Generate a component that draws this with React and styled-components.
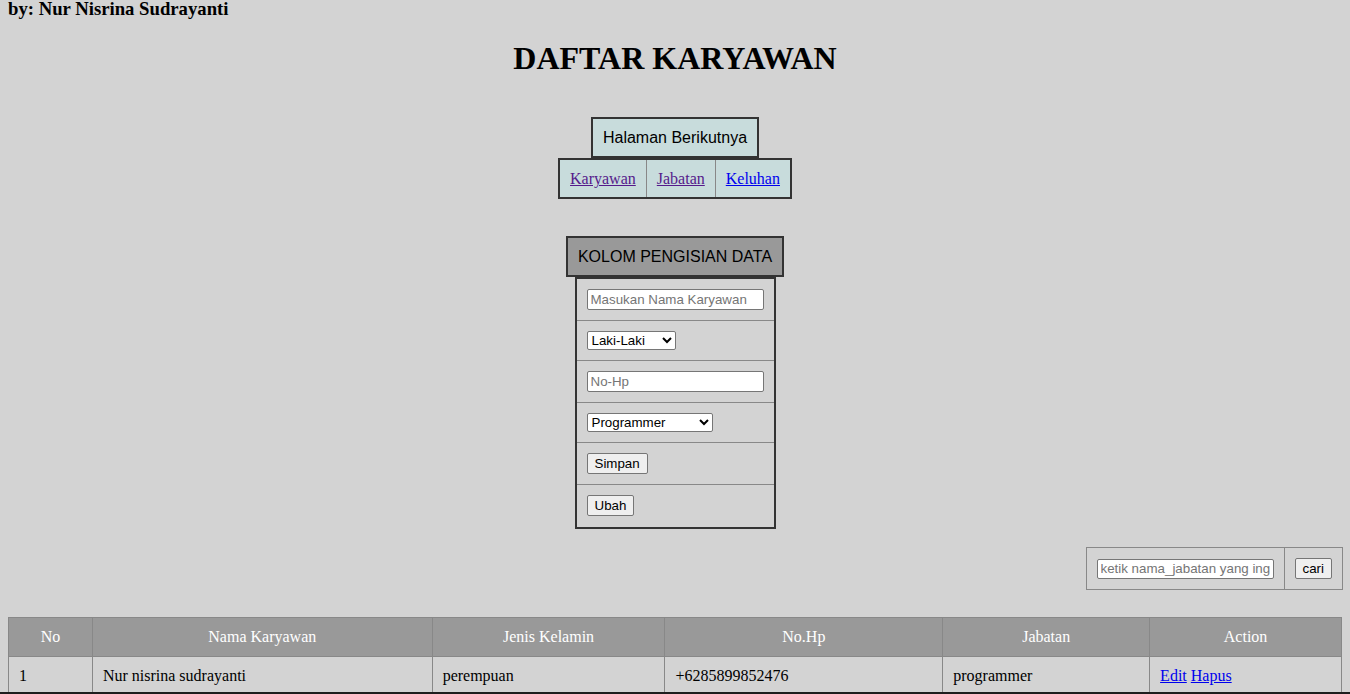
import React from 'react';
import styled, { createGlobalStyle } from 'styled-components';

const GlobalStyle = createGlobalStyle`
  html, body {
    margin: 0;
    padding: 0;
    background: #d3d3d3;
  }
  body {
    padding: 0 8px;
    font-family: "Liberation Serif", "Times New Roman", serif;
    font-size: 16px;
    color: #000;
    overflow: hidden;
  }
`;

const Author = styled.h3`
  margin: -2px 0 0;
  font-size: 18.72px;
  font-weight: bold;
  line-height: 21px;
`;

const Title = styled.h1`
  margin: 21px 0 0;
  text-align: center;
  font-size: 32px;
  line-height: 37px;
  font-weight: bold;
`;

const Center = styled.div`
  display: flex;
  flex-direction: column;
  align-items: center;
  margin-top: ${p => p.$top}px;
`;

const Caption = styled.div`
  font-family: "Liberation Sans", Arial, sans-serif;
  font-size: 16px;
  line-height: 18px;
  padding: 10px 10px 9px;
  border: 2px solid #333;
  background: ${p => p.$bg};
  white-space: nowrap;
`;

const NavTable = styled.table`
  border-collapse: collapse;
  border: 2px solid #333;
  background: #c8dcdc;

  td {
    padding: 10px 10px 9px;
    border: 1px solid #888;
    line-height: 18px;
  }
`;

const NavLink = styled.a`
  color: ${p => (p.$visited ? '#551a8b' : '#0000ee')};
  text-decoration: underline;
  font-size: 16px;
`;

const FormTable = styled.table`
  border-collapse: collapse;
  border: 2px solid #333;
  width: 200px;

  td {
    padding: 10px;
    border-top: 1px solid #888;
    line-height: 0;
  }
  tr:first-child td {
    border-top: none;
  }
  tr:last-child td {
    padding-bottom: 11px;
  }
`;

const TextInput = styled.input`
  box-sizing: border-box;
  width: 177px;
  height: ${p => p.$h || 21}px;
  padding: 1px 3px;
  font-family: "Liberation Sans", Arial, sans-serif;
  font-size: 13.33px;
  border: 1px solid #767676;
  border-radius: 2px;
  background: #fff;
  &::placeholder {
    color: #757575;
  }
`;

const Select = styled.select`
  box-sizing: border-box;
  width: ${p => p.$w}px;
  height: 19px;
  font-family: "Liberation Sans", Arial, sans-serif;
  font-size: 13.33px;
  border: 1px solid #767676;
  border-radius: 2px;
  background: #fff;
  color: #000;
`;

const Button = styled.button`
  box-sizing: border-box;
  height: 21px;
  padding: 1px 7px;
  font-family: "Liberation Sans", Arial, sans-serif;
  font-size: 13.33px;
  border: 1px solid #767676;
  border-radius: 2px;
  background: #efefef;
  color: #000;
`;

const SearchRow = styled.div`
  display: flex;
  justify-content: flex-end;
  margin-top: 18px;
  margin-right: -1px;
`;

const SearchTable = styled.table`
  border-collapse: collapse;
  border: 1px solid #888;

  td {
    padding: 10px;
    border-left: 1px solid #888;
    line-height: 0;
  }
  td:first-child {
    border-left: none;
  }
`;

const DataTable = styled.table`
  width: 100%;
  border-collapse: collapse;
  margin-top: 27px;
  border: 1px solid #888;

  th, td {
    border: 1px solid #888;
    padding: 10px;
    font-size: 16px;
    line-height: 18px;
    text-align: left;
  }
  th {
    background: #999;
    color: #fff;
    font-weight: normal;
    text-align: center;
  }
`;

const ActionLink = styled.a`
  color: #0000ee;
  text-decoration: underline;
`;

const WindowEdge = styled.div`
  position: fixed;
  left: 0;
  right: 0;
  bottom: 0;
  height: 2px;
  background: #1e1e1e;
`;

const columns = [
  { label: 'No', width: 84 },
  { label: 'Nama Karyawan', width: 340 },
  { label: 'Jenis Kelamin', width: 233 },
  { label: 'No.Hp', width: 278 },
  { label: 'Jabatan', width: 207 },
  { label: 'Action', width: 192 },
];

const rows = [
  { no: 1, nama: 'Nur nisrina sudrayanti', jk: 'perempuan', hp: '+6285899852476', jabatan: 'programmer' },
];

export default function App() {
  return (
    <>
      <GlobalStyle />
      <Author>by: Nur Nisrina Sudrayanti</Author>
      <Title>DAFTAR KARYAWAN</Title>

      <Center $top={40}>
        <Caption $bg="#c8dcdc">Halaman Berikutnya</Caption>
        <NavTable>
          <tbody>
            <tr>
              <td><NavLink href="#" $visited>Karyawan</NavLink></td>
              <td><NavLink href="#" $visited>Jabatan</NavLink></td>
              <td><NavLink href="#">Keluhan</NavLink></td>
            </tr>
          </tbody>
        </NavTable>
      </Center>

      <Center $top={37}>
        <Caption $bg="#999">KOLOM PENGISIAN DATA</Caption>
        <FormTable>
          <tbody>
            <tr><td><TextInput placeholder="Masukan Nama Karyawan" /></td></tr>
            <tr>
              <td>
                <Select $w={89} defaultValue="l">
                  <option value="l">Laki-Laki</option>
                  <option value="p">Perempuan</option>
                </Select>
              </td>
            </tr>
            <tr><td><TextInput placeholder="No-Hp" /></td></tr>
            <tr>
              <td>
                <Select $w={126} defaultValue="programmer">
                  <option value="programmer">Programmer</option>
                </Select>
              </td>
            </tr>
            <tr><td><Button>Simpan</Button></td></tr>
            <tr><td><Button>Ubah</Button></td></tr>
          </tbody>
        </FormTable>
      </Center>

      <SearchRow>
        <SearchTable>
          <tbody>
            <tr>
              <td>
                <TextInput $h={20} placeholder="ketik nama_jabatan yang ingin dicari" />
              </td>
              <td><Button>cari</Button></td>
            </tr>
          </tbody>
        </SearchTable>
      </SearchRow>

      <DataTable>
        <colgroup>
          {columns.map(c => <col key={c.label} style={{ width: c.width }} />)}
        </colgroup>
        <thead>
          <tr>{columns.map(c => <th key={c.label}>{c.label}</th>)}</tr>
        </thead>
        <tbody>
          {rows.map(r => (
            <tr key={r.no}>
              <td>{r.no}</td>
              <td>{r.nama}</td>
              <td>{r.jk}</td>
              <td>{r.hp}</td>
              <td>{r.jabatan}</td>
              <td>
                <ActionLink href="#">Edit</ActionLink>{' '}
                <ActionLink href="#">Hapus</ActionLink>
              </td>
            </tr>
          ))}
        </tbody>
      </DataTable>
      <WindowEdge />
    </>
  );
}
